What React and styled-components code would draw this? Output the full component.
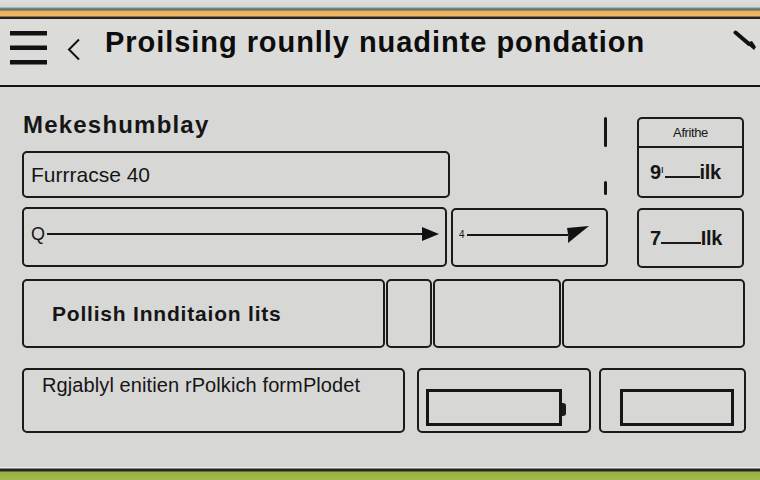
import React from "react";
import styled, { createGlobalStyle } from "styled-components";

const GlobalStyle = createGlobalStyle`
  html, body {
    margin: 0;
    padding: 0;
    background: #d7d7d5;
  }
  #root {
    height: 100vh;
  }
`;

const Page = styled.div`
  height: 480px;
  width: 760px;
  display: flex;
  flex-direction: column;
  font-family: "Liberation Sans", Arial, sans-serif;
  color: #151515;
  background: #d7d7d5;
  overflow: hidden;
`;

const TopStripe = styled.div`
  height: 19px;
  flex-shrink: 0;
  background: linear-gradient(
    to bottom,
    #dedfde 0px,
    #d5d8d6 7px,
    #7a9489 8px,
    #4f6e63 10px,
    #e9ad5e 11px,
    #f3b766 16px,
    #2b2a27 17px,
    #1a1a1a 19px
  );
`;

const Header = styled.header`
  height: 66px;
  flex-shrink: 0;
  display: flex;
  align-items: flex-start;
  padding: 0 3px 0 10px;
  background: #dbdbd9;
  border-bottom: 2px solid #141414;
`;

const MenuIcon = styled.svg`
  width: 37px;
  height: 34px;
  margin-top: 12px;
  flex-shrink: 0;
`;

const BackIcon = styled.svg`
  width: 14px;
  height: 23px;
  margin: 19px 0 0 20px;
  flex-shrink: 0;
`;

const Title = styled.h1`
  margin: 7px 0 0 24px;
  font-size: 29px;
  line-height: 32px;
  font-weight: 700;
  letter-spacing: 0.95px;
  white-space: nowrap;
  color: #0d0d0d;
`;

const PenIcon = styled.svg`
  width: 24px;
  height: 22px;
  margin: 11px 0 0 auto;
  flex-shrink: 0;
`;

const Main = styled.main`
  flex: 1;
  display: flex;
  flex-direction: column;
  padding: 25px 16px 0 22px;
`;

const Row = styled.div`
  display: flex;
  align-items: flex-start;
  margin-top: ${(p) => p.$top || 0}px;
  gap: ${(p) => p.$gap || 0}px;
`;

const FieldColumn = styled.div`
  width: 428px;
  display: flex;
  flex-direction: column;
`;

const SectionLabel = styled.div`
  font-size: 24px;
  line-height: 26px;
  font-weight: 700;
  letter-spacing: 1.2px;
  margin: 0 0 13px 1px;
`;

const Box = styled.div`
  box-sizing: border-box;
  width: ${(p) => p.$w}px;
  height: ${(p) => p.$h}px;
  margin-top: ${(p) => p.$mt || 0}px;
  margin-left: ${(p) => p.$ml || 0}px;
  padding-bottom: ${(p) => p.$pb || 0}px;
  border: 2px solid #1b1b1b;
  border-radius: 5px;
  flex-shrink: 0;
  display: flex;
  align-items: ${(p) => p.$align || "center"};
  position: relative;
`;

const InputText = styled.span`
  font-size: 21px;
  padding-left: 7px;
  letter-spacing: 0;
`;

const TickColumn = styled.div`
  flex: 1;
  display: flex;
  flex-direction: column;
  align-items: flex-end;
  padding: 5px 30px 0 0;
`;

const Tick = styled.div`
  width: 3px;
  height: ${(p) => p.$h}px;
  margin-top: ${(p) => p.$mt || 0}px;
  background: #161616;
  border-radius: 2px;
`;

const Card = styled.div`
  box-sizing: border-box;
  width: 107px;
  height: ${(p) => p.$h}px;
  margin-top: ${(p) => p.$mt || 0}px;
  margin-left: ${(p) => p.$ml || 0}px;
  border: 2px solid #1b1b1b;
  border-radius: 5px;
  display: flex;
  flex-direction: column;
  flex-shrink: 0;
`;

const CardHead = styled.div`
  height: 27px;
  border-bottom: 2px solid #1b1b1b;
  display: flex;
  align-items: center;
  justify-content: center;
  font-size: 13px;
  letter-spacing: -0.4px;
`;

const CardValue = styled.div`
  flex: 1;
  display: flex;
  align-items: center;
  padding-left: 11px;
  font-size: 20px;
  font-weight: 700;
  letter-spacing: -0.3px;
`;

const Mark = styled.span`
  font-size: 11px;
  font-weight: 400;
  align-self: center;
  margin: -6px 1px 0 0;
`;

const Dash = styled.span`
  display: inline-block;
  width: ${(p) => p.$w}px;
  height: 2px;
  background: #1b1b1b;
  align-self: center;
  margin-top: 9px;
`;

const ArrowLead = styled.span`
  font-size: ${(p) => p.$size}px;
  padding-left: ${(p) => p.$pl}px;
  margin-right: 2px;
`;

const ArrowLine = styled.span`
  flex: 1;
  height: 2px;
  background: #161616;
  margin-right: -2px;
`;

const ArrowHead = styled.svg`
  width: ${(p) => p.$w}px;
  height: 18px;
  flex-shrink: 0;
  margin-right: ${(p) => p.$mr}px;
`;

const BoldLabel = styled.span`
  font-size: 21px;
  font-weight: 700;
  padding-left: 28px;
  letter-spacing: 0.8px;
`;

const NoteText = styled.span`
  font-size: 20px;
  padding: 4px 0 0 18px;
  letter-spacing: 0.1px;
`;

const InnerRect = styled.div`
  box-sizing: border-box;
  width: ${(p) => p.$w}px;
  height: 37px;
  margin: 19px 0 0 ${(p) => p.$ml}px;
  border: 3px solid #161616;
`;

const Nub = styled.span`
  position: absolute;
  left: 143px;
  top: 33px;
  width: 4px;
  height: 13px;
  background: #1b1b1b;
  border-radius: 0 3px 3px 0;
`;

const Footer = styled.div`
  height: 13px;
  flex-shrink: 0;
  background: linear-gradient(
    to bottom,
    #eeeeee 0px,
    #eeeeee 1px,
    #1e1e1c 2px,
    #2a2c22 4px,
    #99b043 5px,
    #a5bb4a 13px
  );
`;

export default function App() {
  return (
    <>
      <GlobalStyle />
      <Page>
        <TopStripe />
        <Header>
          <MenuIcon viewBox="0 0 37 34">
            <rect x="0" y="0" width="37" height="4.5" fill="#111" />
            <rect x="0" y="14.5" width="37" height="4.5" fill="#111" />
            <rect x="0" y="29" width="37" height="4.5" fill="#111" />
          </MenuIcon>
          <BackIcon viewBox="0 0 14 23">
            <polyline points="12,1.5 2,11.5 12,21.5" fill="none" stroke="#111" strokeWidth="2" />
          </BackIcon>
          <Title>Proilsing rounlly nuadinte pondation</Title>
          <PenIcon viewBox="0 0 24 22">
            <line x1="2.5" y1="2.5" x2="16" y2="14" stroke="#111" strokeWidth="4" strokeLinecap="round" />
            <polygon points="13,13 19,11 23,17 21,20" fill="#111" />
          </PenIcon>
        </Header>

        <Main>
          <Row>
            <FieldColumn>
              <SectionLabel>Mekeshumblay</SectionLabel>
              <Box $w={428} $h={47}>
                <InputText>Furrracse 40</InputText>
              </Box>
            </FieldColumn>
            <TickColumn>
              <Tick $h={30} />
              <Tick $h={14} $mt={34} />
            </TickColumn>
            <Card $h={81} $mt={5}>
              <CardHead>Afrithe</CardHead>
              <CardValue>
                9<Mark>ı</Mark>
                <Dash $w={35} />
                ilk
              </CardValue>
            </Card>
          </Row>

          <Row $top={9}>
            <Box $w={425} $h={60} $pb={6}>
              <ArrowLead $size={18} $pl={7}>Q</ArrowLead>
              <ArrowLine />
              <ArrowHead viewBox="0 0 17 18" $w={17} $mr={6}>
                <polygon points="0,2 17,9 0,16" fill="#111" />
              </ArrowHead>
            </Box>
            <Box $w={157} $h={59} $mt={1} $ml={4} $pb={6}>
              <ArrowLead $size={10} $pl={6}>4</ArrowLead>
              <ArrowLine />
              <ArrowHead viewBox="0 0 24 18" $w={24} $mr={16}>
                <path d="M1 2 L23 0 L18 4 L2 17 Q3 9 1 2 Z" fill="#111" />
              </ArrowHead>
            </Box>
            <Card $h={60} $mt={1} $ml={29}>
              <CardValue>
                7<Dash $w={40} />
                Ilk
              </CardValue>
            </Card>
          </Row>

          <Row $top={11} $gap={1}>
            <Box $w={363} $h={69}>
              <BoldLabel>Pollish Innditaion lits</BoldLabel>
            </Box>
            <Box $w={46} $h={69} />
            <Box $w={128} $h={69} />
            <Box $w={183} $h={69} />
          </Row>

          <Row $top={20}>
            <Box $w={383} $h={65} $align="flex-start">
              <NoteText>Rgjablyl enitien rPolkich formPlodet</NoteText>
            </Box>
            <Box $w={174} $h={65} $ml={12} $align="flex-start">
              <InnerRect $w={136} $ml={7} />
              <Nub />
            </Box>
            <Box $w={147} $h={65} $ml={8} $align="flex-start">
              <InnerRect $w={114} $ml={19} />
            </Box>
          </Row>
        </Main>

        <Footer />
      </Page>
    </>
  );
}
